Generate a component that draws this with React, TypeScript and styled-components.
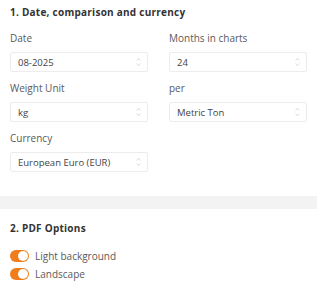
import React from 'react';
import styled, { createGlobalStyle } from 'styled-components';

const GlobalStyle = createGlobalStyle`
  html, body {
    margin: 0;
    padding: 0;
    background: #ffffff;
  }
  body {
    font-family: 'Open Sans', 'Liberation Sans', sans-serif;
    color: #444;
  }
`;

const Page = styled.div`
  width: 317px;
  display: flex;
  flex-direction: column;
`;

const Section = styled.section<{ $top?: number; $bottom?: number }>`
  padding: ${({ $top }) => $top ?? 6}px 10px ${({ $bottom }) => $bottom ?? 10}px 10px;
  display: flex;
  flex-direction: column;
`;

const SectionTitle = styled.h2`
  margin: 0;
  font-size: 10px;
  font-weight: 700;
  letter-spacing: 0.25px;
  line-height: 12px;
  color: #333;
`;

const FieldGrid = styled.div`
  margin-top: 14px;
  display: grid;
  grid-template-columns: 138px 138px;
  column-gap: 21px;
  row-gap: 10px;
`;

const Field = styled.label`
  display: flex;
  flex-direction: column;
  gap: 7px;
`;

const Label = styled.span`
  font-size: 10px;
  line-height: 13px;
  color: #5a5a5a;
`;

const SelectBox = styled.div`
  height: 20px;
  box-sizing: border-box;
  border: 1px solid #ececec;
  border-radius: 2px;
  display: flex;
  align-items: center;
  justify-content: space-between;
  padding: 0 6px 0 7px;
  font-size: 9.5px;
  color: #444;
`;

const Band = styled.div`
  height: 13px;
  background: #f3f3f3;
`;

const ToggleList = styled.div`
  margin-top: 15px;
  display: flex;
  flex-direction: column;
  gap: 4px;
`;

const ToggleRow = styled.div`
  display: flex;
  align-items: center;
  gap: 6px;
  font-size: 10px;
  color: #5a5a5a;
`;

const Toggle = styled.span<{ $on: boolean }>`
  width: 19px;
  height: 12px;
  box-sizing: border-box;
  border-radius: 6px;
  background: ${({ $on }) => ($on ? '#f07c1b' : '#ccc')};
  display: flex;
  align-items: center;
  justify-content: ${({ $on }) => ($on ? 'flex-end' : 'flex-start')};
  padding: 1px;
`;

const Knob = styled.span`
  width: 10px;
  height: 10px;
  border-radius: 50%;
  background: #fff;
`;

const Stepper = () => (
  <svg width="5" height="10" viewBox="0 0 5 10" fill="none" stroke="#d4d4d4" strokeWidth="0.8">
    <path d="M0.6 3.6 L2.5 1.2 L4.4 3.6" />
    <path d="M0.6 6.4 L2.5 8.8 L4.4 6.4" />
  </svg>
);

const fields = [
  { label: 'Date', value: '08-2025' },
  { label: 'Months in charts', value: '24' },
  { label: 'Weight Unit', value: 'kg' },
  { label: 'per', value: 'Metric Ton' },
  { label: 'Currency', value: 'European Euro (EUR)' },
];

export default function App() {
  return (
    <Page>
      <GlobalStyle />
      <Section $bottom={24}>
        <SectionTitle>1. Date, comparison and currency</SectionTitle>
        <FieldGrid>
          {fields.map((f) => (
            <Field key={f.label}>
              <Label>{f.label}</Label>
              <SelectBox>
                <span>{f.value}</span>
                <Stepper />
              </SelectBox>
            </Field>
          ))}
        </FieldGrid>
      </Section>
      <Band />
      <Section $top={13}>
        <SectionTitle>2. PDF Options</SectionTitle>
        <ToggleList>
          <ToggleRow>
            <Toggle $on>
              <Knob />
            </Toggle>
            Light background
          </ToggleRow>
          <ToggleRow>
            <Toggle $on>
              <Knob />
            </Toggle>
            Landscape
          </ToggleRow>
        </ToggleList>
      </Section>
    </Page>
  );
}
